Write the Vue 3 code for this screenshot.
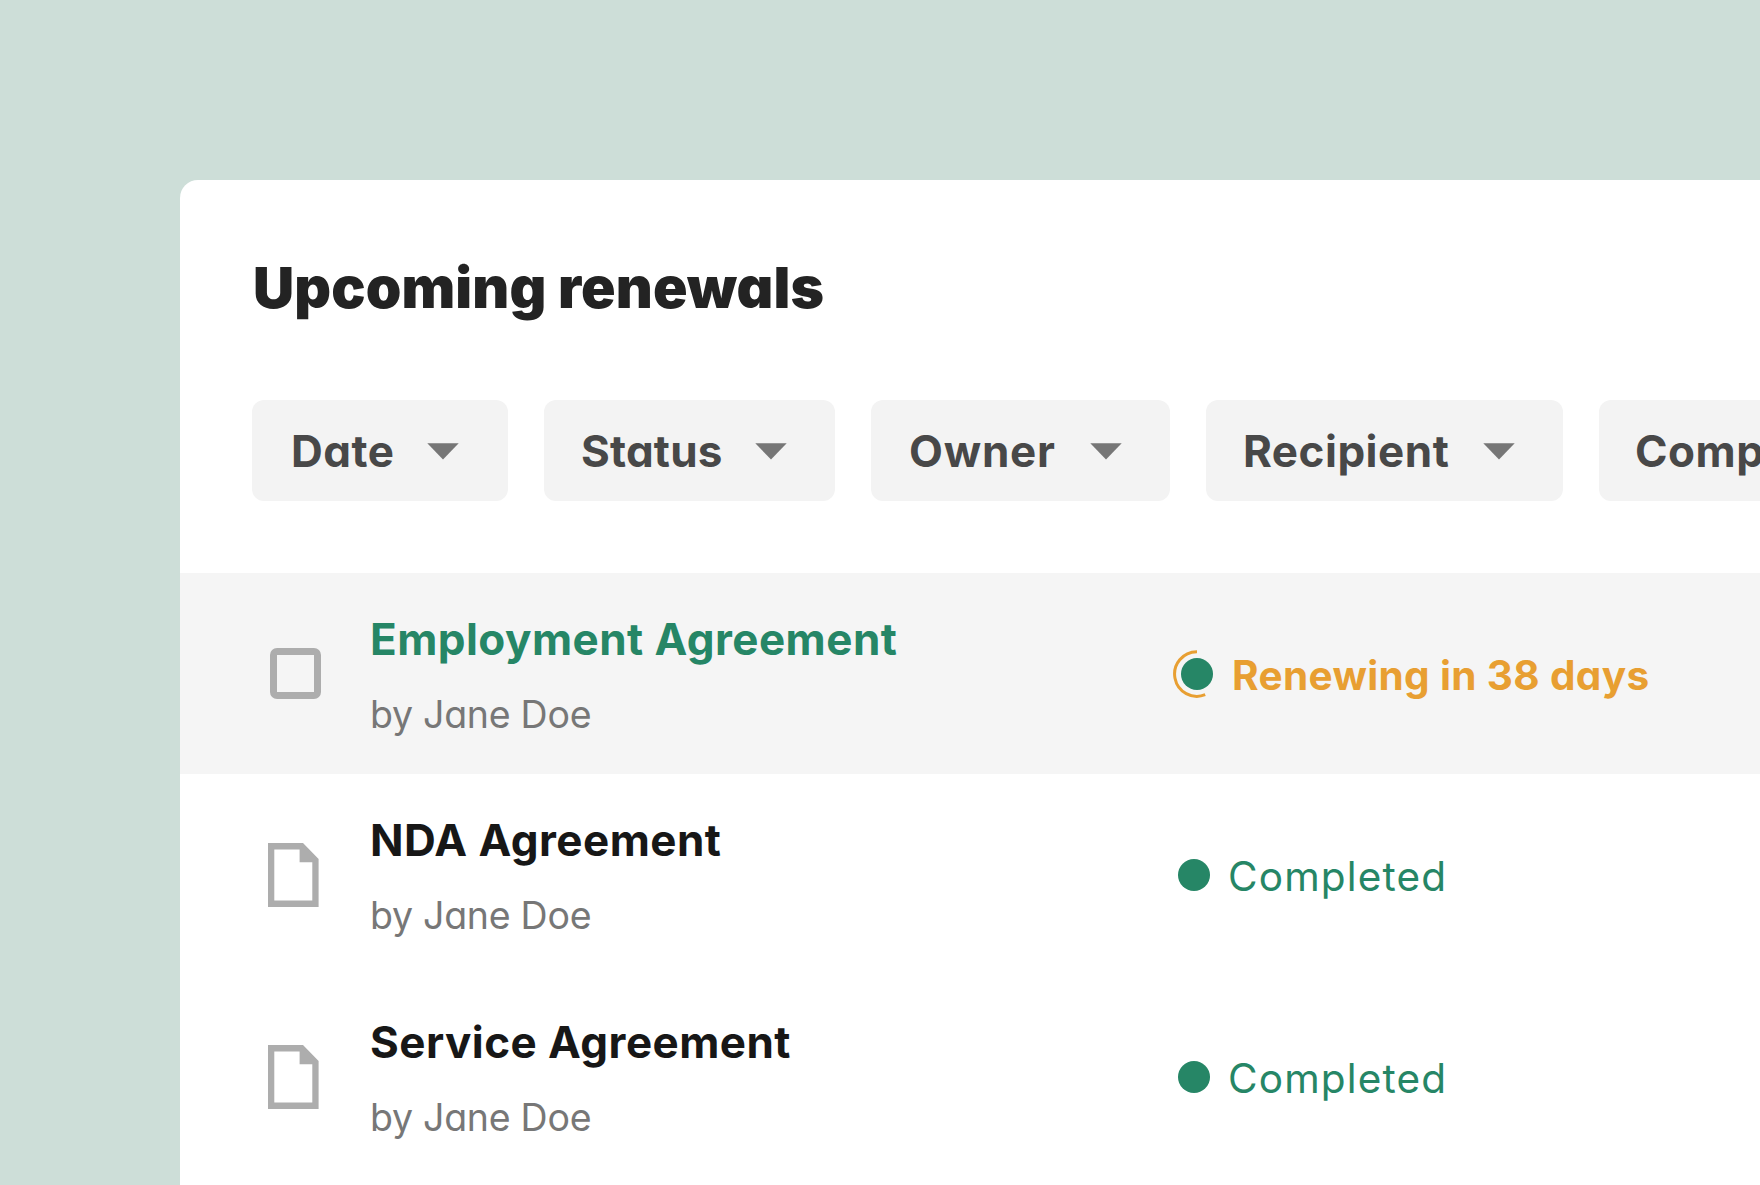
<template>
  <div class="stage">
    <main class="card">
      <h1 class="card-title">Upcoming renewals</h1>

      <!-- Filters -->
      <div class="filters">
        <button v-for="filter in filters" :key="filter.key" type="button" class="filter" :class="filter.key">
          <span class="filter-label">{{ filter.label }}</span>
          <svg class="caret" width="32" height="17" viewBox="0 0 32 17">
            <path d="M0.3 0.3H31.7L16 16.4z" fill="#767676" />
          </svg>
        </button>
      </div>

      <!-- Documents -->
      <ul class="rows">
        <li v-for="doc in documents" :key="doc.title" class="row" :class="{ active: doc.renewing }">
          <div class="row-icon">
            <span v-if="doc.renewing" class="checkbox"></span>
            <svg v-else class="file" width="51" height="64" viewBox="0 0 51 64">
              <path
                fill="#adadad"
                fill-rule="evenodd"
                d="M0 0H35L50.6 16V64H0zM6.3 6.4V57.6H44.3V19.2H31.6V6.4z"
              />
            </svg>
          </div>
          <div class="row-main">
            <div class="row-title">{{ doc.title }}</div>
            <div class="row-author">by {{ doc.author }}</div>
          </div>
          <div class="status">
            <svg v-if="doc.renewing" class="dot-ring" width="44" height="48" viewBox="0 0 44 48">
              <circle cx="24" cy="24" r="16" fill="#268666" />
              <path d="M24 1.7A22.3 22.3 0 1 0 32.2 44.7" fill="none" stroke="#e89f32" stroke-width="3" />
            </svg>
            <span v-else class="dot"></span>
            <span class="status-label">{{ doc.status }}</span>
          </div>
        </li>
      </ul>
    </main>
  </div>
</template>

<script setup>
const filters = [
  { key: 'date', label: 'Date' },
  { key: 'state', label: 'Status' },
  { key: 'owner', label: 'Owner' },
  { key: 'recipient', label: 'Recipient' },
  { key: 'company', label: 'Comp' }
]

const documents = [
  { title: 'Employment Agreement', author: 'Jane Doe', status: 'Renewing in 38 days', renewing: true },
  { title: 'NDA Agreement', author: 'Jane Doe', status: 'Completed', renewing: false },
  { title: 'Service Agreement', author: 'Jane Doe', status: 'Completed', renewing: false }
]
</script>

<style>
body {
  margin: 0;
  overflow: hidden;
}
</style>

<style scoped>
.stage {
  box-sizing: border-box;
  width: 1760px;
  height: 1185px;
  padding: 180px 0 0 180px;
  overflow: hidden;
  background: #cdded8;
  font-family: Inter, "Liberation Sans", sans-serif;
  /* single-storey a */
  font-feature-settings: "cv11";
}

.card {
  height: 1005px;
  overflow: hidden;
  background: #fff;
  border-radius: 18px 0 0 0;
}

.card-title {
  margin: 0;
  padding: 73px 0 0 73px;
  color: #232323;
  font-size: 57px;
  font-weight: 900;
  letter-spacing: 0.13px;
  line-height: 70px;
}

.filters {
  display: flex;
  gap: 36px;
  padding: 77px 0 72px 72px;
}

.filter {
  display: flex;
  flex: none;
  align-items: center;
  justify-content: space-between;
  box-sizing: border-box;
  height: 101px;
  padding: 1px 48px 0 37px;
  border: 0;
  border-radius: 12px;
  background: #f3f3f3;
  color: #484848;
  font-family: inherit;
  font-feature-settings: inherit;
  font-size: 44px;
  font-weight: 700;
  letter-spacing: 0.5px;
}

.caret {
  margin-top: 1px;
}

.date {
  width: 256px;
  padding-left: 39px;
  padding-right: 49px;
}

.state {
  width: 291px;
  letter-spacing: 0.2px;
}

.owner {
  width: 299px;
  padding-left: 38px;
  letter-spacing: 0.8px;
}

.recipient {
  width: 357px;
}

.company {
  width: 350px;
  padding-left: 36px;
}

.rows {
  margin: 0;
  padding: 0;
  list-style: none;
}

.row {
  display: grid;
  grid-template-columns: 190px 800px 1fr;
  box-sizing: border-box;
  height: 201.7px;
}

.row.active {
  height: 201px;
  background: #f5f5f5;
}

.row-icon {
  display: flex;
  align-items: center;
  padding-left: 88px;
}

.checkbox {
  box-sizing: border-box;
  width: 51px;
  height: 51px;
  margin-left: 2px;
  border: 7px solid #adadad;
  border-radius: 7px;
}

.file {
  margin-top: 1px;
}

.row-main {
  padding-top: 40px;
}

.row-title {
  color: #171717;
  font-size: 44px;
  font-weight: 700;
  letter-spacing: 0.45px;
  line-height: 52px;
}

.active .row-title {
  color: #268666;
}

.row-author {
  margin-top: 27px;
  color: #777;
  font-size: 37.5px;
  font-weight: 400;
  letter-spacing: -0.27px;
  line-height: 46px;
}

.status {
  display: flex;
  align-items: center;
  color: #268666;
  font-size: 40.5px;
  font-weight: 400;
  letter-spacing: 1.15px;
  white-space: nowrap;
}

.active .status {
  color: #e89f32;
  font-weight: 700;
  letter-spacing: 0.35px;
}

.status-label {
  padding-top: 4px;
}

.dot {
  width: 32px;
  height: 32px;
  margin: 1px 18px 0 8px;
  border-radius: 50%;
  background: #268666;
}

.dot-ring {
  margin: 0 15px 0 3px;
}
</style>
